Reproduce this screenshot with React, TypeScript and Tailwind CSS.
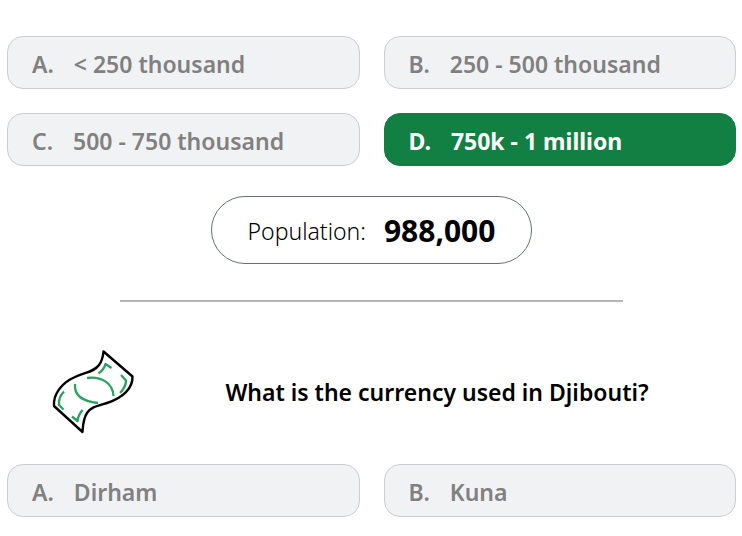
import { useState } from 'react';
import clsx from 'clsx';

interface Option {
  letter: string;
  label: string;
}

interface AnswerGridProps {
  options: Option[];
  correct?: string;
}

const populationOptions: Option[] = [
  { letter: 'A', label: '< 250 thousand' },
  { letter: 'B', label: '250 - 500 thousand' },
  { letter: 'C', label: '500 - 750 thousand' },
  { letter: 'D', label: '750k - 1 million' },
];

const currencyOptions: Option[] = [
  { letter: 'A', label: 'Dirham' },
  { letter: 'B', label: 'Kuna' },
];

function AnswerGrid({ options, correct }: AnswerGridProps) {
  const [selected, setSelected] = useState(correct);

  return (
    <div className="grid grid-cols-2 gap-6">
      {options.map(({ letter, label }) => (
        <button
          key={letter}
          type="button"
          disabled={Boolean(correct)}
          onClick={() => setSelected(letter)}
          className={clsx(
            'flex items-center gap-5 rounded-2xl border px-6 pt-2.5 pb-1.5 text-left text-[23px] leading-[35px]',
            selected === letter
              ? 'border-[#127f43] bg-[#127f43] font-bold text-white'
              : 'border-[#cccdd0] bg-[#f1f2f4] font-semibold text-[#808080]'
          )}
        >
          <span>{letter}.</span>
          <span>{label}</span>
        </button>
      ))}
    </div>
  );
}

function BanknoteIcon() {
  return (
    <svg viewBox="0 0 110 105" className="w-[110px] shrink-0" fill="none" strokeLinecap="round" strokeLinejoin="round" aria-hidden="true">
      <path
        d="M63.5 11.5 92.5 36.5C93 48 83 58 67 63C57 66 51 67 47 73C43 79 43 85 42.5 92L14 66C13 55 21 43 35 37C46 32 54 32 59 25C62 21 63 17 63.5 11.5Z"
        stroke="#000"
        strokeWidth="2.4"
      />
      <g stroke="#27a35f" strokeWidth="2.3" strokeLinecap="butt">
        <path d="M58.5 33.5C62 31 64.5 28 65.5 24L71.5 28" />
        <path d="M81 35 86 40.5C86 45 84 49 80 53" />
        <path d="M24 51.5C20.5 55 18.5 60 19 65L23.5 69.5" />
        <path d="M32 76.5 37.5 81C38 77 39.5 73.5 42.5 70" />
        <path d="M47 38C61 36 73 43 73.5 56" />
        <path d="M35 44C34 56 43 61.5 58 63" />
      </g>
    </svg>
  );
}

export default function App() {
  return (
    <main className="bg-white pt-9 pr-1.5 pl-[7px] font-['Noto_Sans','Open_Sans',sans-serif] text-black">
      <AnswerGrid options={populationOptions} correct="D" />

      <div className="mt-[30px] flex justify-center">
        <p className="flex items-center gap-[18px] rounded-full border border-[#65707e] px-9 pt-[13px] pb-[11px]">
          <span className="text-[23px] font-light">Population:</span>
          <span className="text-[30px] leading-[42px] font-bold">988,000</span>
        </p>
      </div>

      <hr className="mx-auto mt-9 w-[69%] border-t-2 border-[#b5b5b5]" />

      <section>
        <div className="mt-[38px] flex items-center pl-[33px]">
          <BanknoteIcon />
          <h2 className="flex-1 pr-3 text-center text-[23px] font-semibold">What is the currency used in Djibouti?</h2>
        </div>
        <div className="mt-[19px]">
          <AnswerGrid options={currencyOptions} />
        </div>
      </section>
    </main>
  );
}
